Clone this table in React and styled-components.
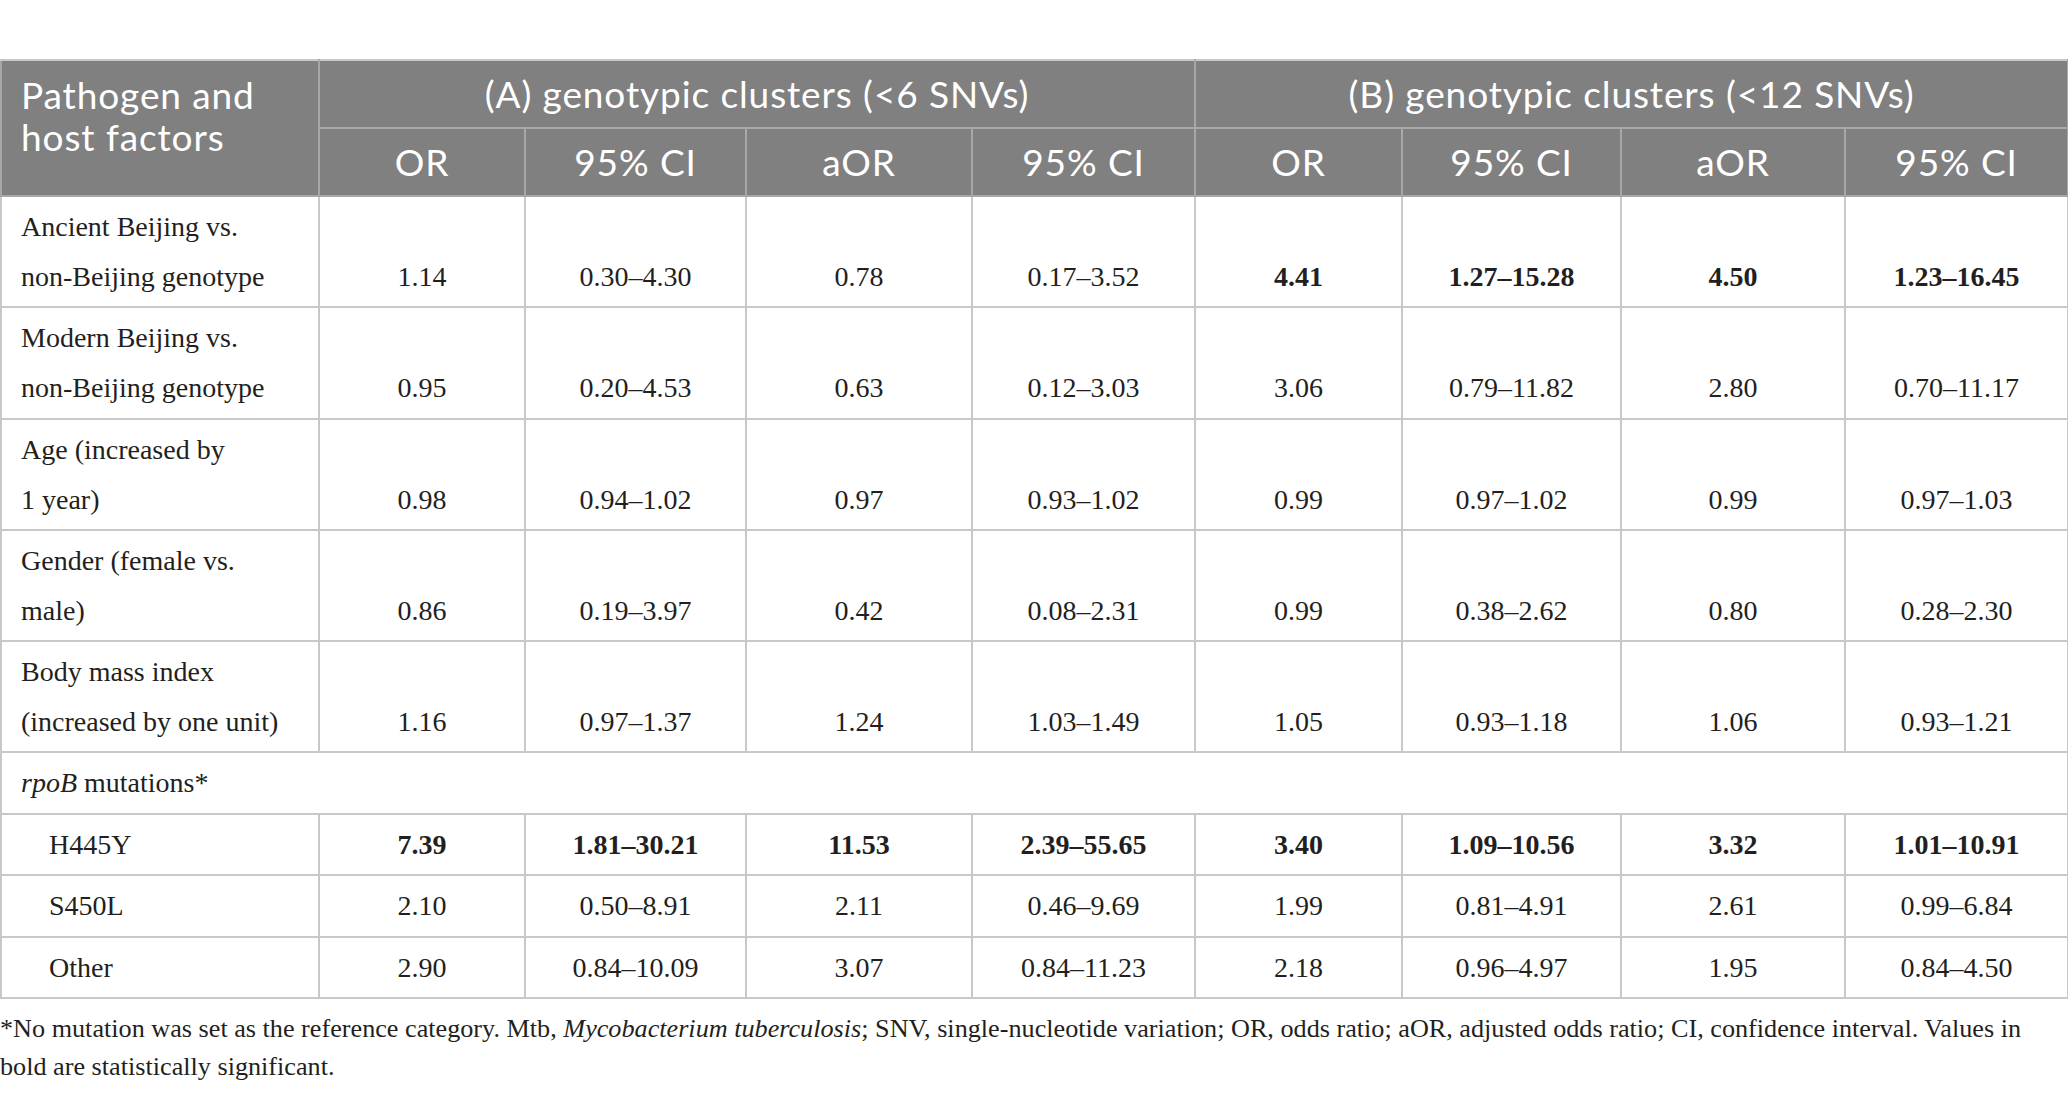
import React from 'react'
import styled, { createGlobalStyle } from 'styled-components'

const GlobalStyle = createGlobalStyle`
  html, body {
    margin: 0;
    padding: 0;
    background: #fff;
  }
`

const columns = [318, 206, 221, 226, 223, 207, 219, 224, 223]

const rows = [
  {
    label: ['Ancient Beijing vs.', 'non-Beijing genotype'],
    values: ['1.14', '0.30–4.30', '0.78', '0.17–3.52', '4.41', '1.27–15.28', '4.50', '1.23–16.45'],
    bold: [0, 0, 0, 0, 1, 1, 1, 1],
  },
  {
    label: ['Modern Beijing vs.', 'non-Beijing genotype'],
    values: ['0.95', '0.20–4.53', '0.63', '0.12–3.03', '3.06', '0.79–11.82', '2.80', '0.70–11.17'],
  },
  {
    label: ['Age (increased by', '1 year)'],
    values: ['0.98', '0.94–1.02', '0.97', '0.93–1.02', '0.99', '0.97–1.02', '0.99', '0.97–1.03'],
  },
  {
    label: ['Gender (female vs.', 'male)'],
    values: ['0.86', '0.19–3.97', '0.42', '0.08–2.31', '0.99', '0.38–2.62', '0.80', '0.28–2.30'],
  },
  {
    label: ['Body mass index', '(increased by one unit)'],
    values: ['1.16', '0.97–1.37', '1.24', '1.03–1.49', '1.05', '0.93–1.18', '1.06', '0.93–1.21'],
  },
]

const mutations = [
  {
    label: 'H445Y',
    values: ['7.39', '1.81–30.21', '11.53', '2.39–55.65', '3.40', '1.09–10.56', '3.32', '1.01–10.91'],
    bold: [1, 1, 1, 1, 1, 1, 1, 1],
  },
  {
    label: 'S450L',
    values: ['2.10', '0.50–8.91', '2.11', '0.46–9.69', '1.99', '0.81–4.91', '2.61', '0.99–6.84'],
  },
  {
    label: 'Other',
    values: ['2.90', '0.84–10.09', '3.07', '0.84–11.23', '2.18', '0.96–4.97', '1.95', '0.84–4.50'],
  },
]

const subHeads = ['OR', '95% CI', 'aOR', '95% CI', 'OR', '95% CI', 'aOR', '95% CI']

function App() {
  return (
    <Page>
      <GlobalStyle />
      <Table>
        <colgroup>
          {columns.map((w, i) => (
            <col key={i} style={{ width: w }} />
          ))}
        </colgroup>
        <thead>
          <tr>
            <CornerCell rowSpan={2}>
              Pathogen and
              <br />
              host factors
            </CornerCell>
            <GroupCell colSpan={4}>(A) genotypic clusters (&lt;6 SNVs)</GroupCell>
            <GroupCell colSpan={4}>(B) genotypic clusters (&lt;12 SNVs)</GroupCell>
          </tr>
          <tr>
            {subHeads.map((h, i) => (
              <GroupCell key={i}>{h}</GroupCell>
            ))}
          </tr>
        </thead>
        <tbody>
          {rows.map((r, i) => (
            <tr key={i}>
              <LabelCell $tall>
                {r.label[0]}
                <br />
                {r.label[1]}
              </LabelCell>
              {r.values.map((v, j) => (
                <ValueCell key={j} $tall $bold={r.bold && r.bold[j]}>
                  {v}
                </ValueCell>
              ))}
            </tr>
          ))}
          <tr>
            <LabelCell colSpan={9}>
              <em>rpoB</em> mutations*
            </LabelCell>
          </tr>
          {mutations.map((r, i) => (
            <tr key={i}>
              <LabelCell $indent>{r.label}</LabelCell>
              {r.values.map((v, j) => (
                <ValueCell key={j} $bold={r.bold && r.bold[j]}>
                  {v}
                </ValueCell>
              ))}
            </tr>
          ))}
        </tbody>
      </Table>
      <Footnote>
        *No mutation was set as the reference category. Mtb, <em>Mycobacterium tuberculosis</em>; SNV,
        single-nucleotide variation; OR, odds ratio; aOR, adjusted odds ratio; CI, confidence interval.
        Values in bold are statistically significant.
      </Footnote>
    </Page>
  )
}

export default App

const Page = styled.div`
  width: 2068px;
  padding-top: 59px;
  font-family: "Liberation Serif", "Times New Roman", serif;
  color: #231f20;
`

const Table = styled.table`
  width: 2068px;
  border-collapse: collapse;
  table-layout: fixed;
`

const GroupCell = styled.th`
  background: #808080;
  color: #fff;
  font-family: Lato, "Open Sans", sans-serif;
  font-weight: 400;
  font-size: 37px;
  letter-spacing: 0.9px;
  line-height: 42px;
  padding: 12px 4px 12px;
  text-align: center;
  vertical-align: middle;
  border: 2px solid #a7a7a7;
  border-top-color: #c8c8c8;
`

const CornerCell = styled(GroupCell)`
  text-align: left;
  vertical-align: top;
  padding: 13px 4px 8px 19px;
`

const LabelCell = styled.td`
  font-size: 28px;
  line-height: 50px;
  padding: 5px 8px ${(p) => (p.$tall ? '4.3px' : '4.4px')} ${(p) => (p.$indent ? '47px' : '19px')};
  text-align: left;
  vertical-align: top;
  border: 2px solid #c8c8c8;
  white-space: nowrap;
`

const ValueCell = styled.td`
  font-size: 28px;
  line-height: 50px;
  padding: 5px 4px ${(p) => (p.$tall ? '4.3px' : '4.4px')};
  text-align: center;
  vertical-align: bottom;
  font-weight: ${(p) => (p.$bold ? 700 : 400)};
  border: 2px solid #c8c8c8;
`

const Footnote = styled.p`
  margin: 11px 0 0;
  width: 2040px;
  font-size: 26.2px;
  line-height: 38px;
`
